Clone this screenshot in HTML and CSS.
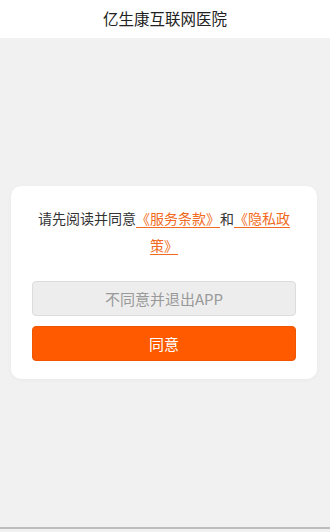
FILE: index.html
```html
<!DOCTYPE html>
<html lang="zh">
<head>
  <meta charset="UTF-8" />
  <meta name="viewport" content="width=device-width, initial-scale=1.0" />
  <title>亿生康互联网医院</title>
  <link rel="stylesheet" href="styles.css">
</head>
<body>
  <div class="page">
    <!-- Title bar -->
    <div class="title-bar">亿生康互联网医院</div>

    <div class="content">
      <!-- Agreement dialog -->
      <div class="agree-card">
        <p class="agree-text">请先阅读并同意<a class="link" href="#">《服务条款》</a>和<a class="link" href="#">《隐私政策》</a></p>
        <button class="btn btn-refuse">不同意并退出APP</button>
        <button class="btn btn-agree">同意</button>
      </div>
    </div>
  </div>
</body>
</html>
```

FILE: styles.css
```css
/* Basic page styling */
html,
body {
  margin: 0;
  padding: 0;
  height: 100%;
}

body {
  font-family: "Noto Sans CJK SC", "Noto Sans", sans-serif;
  background-color: #f1f1f1;
}

.page {
  display: flex;
  flex-direction: column;
  height: 529px;
  box-sizing: border-box;
  border-bottom: 2px solid #bdbdbd;
}

/* Title bar */
.title-bar {
  height: 38px;
  line-height: 36px;
  background-color: #fff;
  text-align: center;
  font-size: 15.5px;
  color: #222;
}

.content {
  flex: 1;
  padding: 148px 13px 0 11px;
}

/* Agreement card */
.agree-card {
  background-color: #fff;
  border-radius: 10px;
  padding: 19px 21px 18px 21px;
  box-shadow: 0 1px 4px rgba(0, 0, 0, 0.04);
}

.agree-text {
  margin: 0 0 22px;
  padding: 0 6px;
  font-size: 14px;
  line-height: 27px;
  text-align: center;
  color: #333;
}

.link {
  color: #f26a21;
  text-decoration: underline;
  text-underline-offset: 3px;
}

/* Buttons */
.btn {
  display: block;
  width: 100%;
  height: 35px;
  border-radius: 4px;
  font-family: inherit;
  font-size: 15px;
  cursor: pointer;
}

.btn-refuse {
  background-color: #ededed;
  border: 1px solid #dcdcdc;
  color: #999;
  margin-bottom: 10px;
}

.btn-agree {
  background-color: #ff5a00;
  border: 1px solid #f05500;
  color: #fff;
}
```
